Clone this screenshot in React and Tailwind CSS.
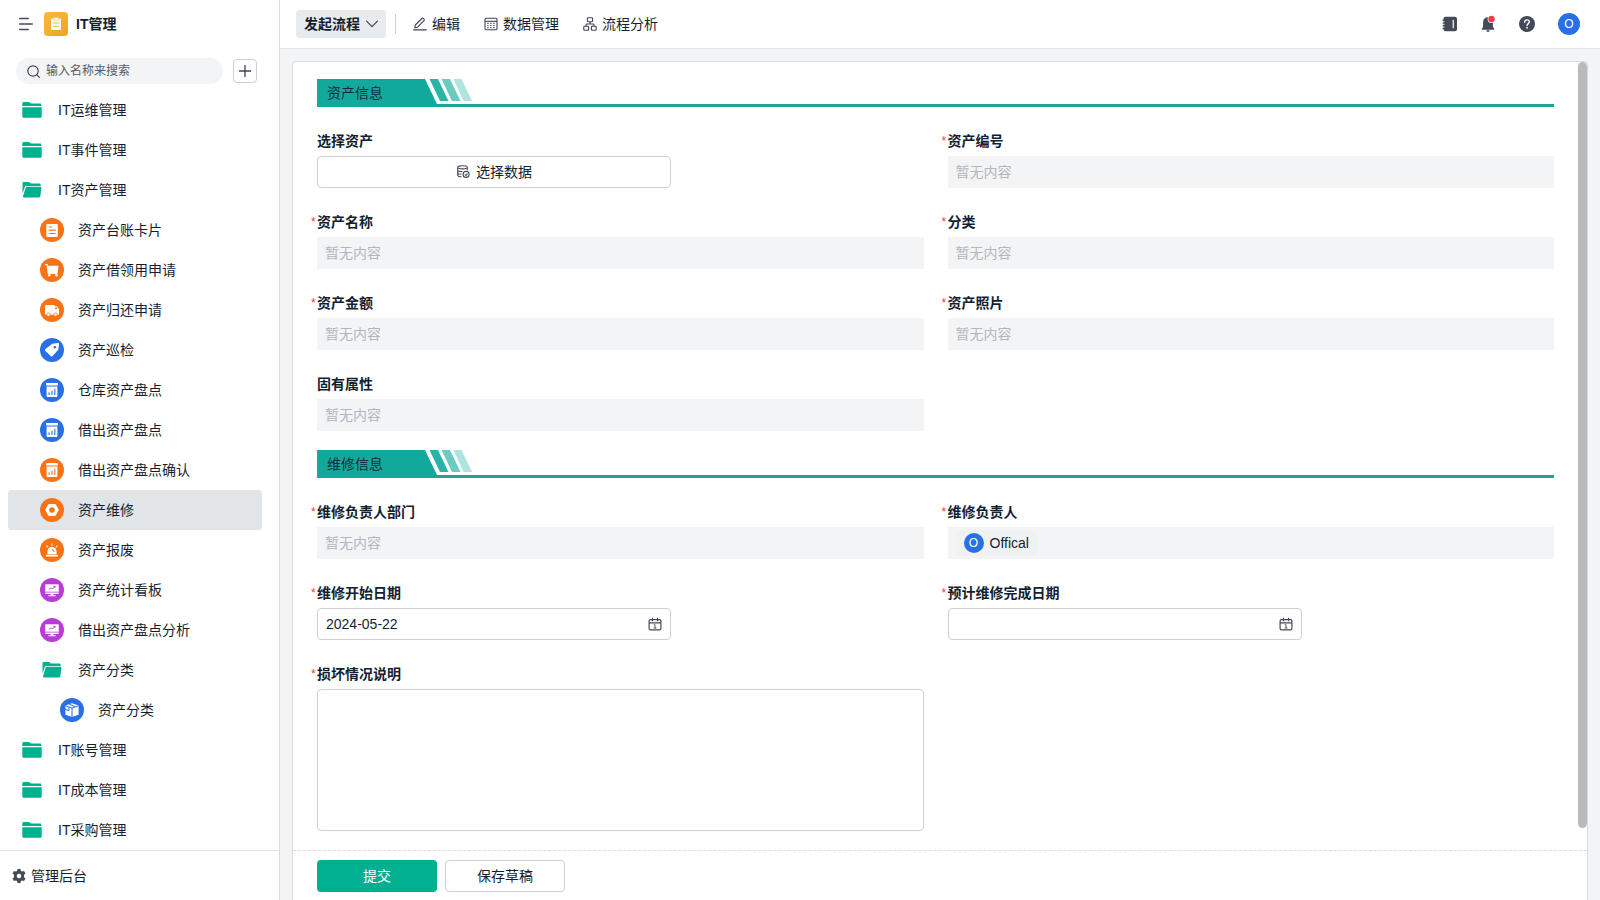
import React from "react";

/* ---------- icons ---------- */

const FolderClosed = () => (
  <svg width="20" height="16" viewBox="0 0 20 16" fill="#00b08f" aria-hidden="true">
    <path d="M1.5 0h5.2c.6 0 1 .2 1.4.6l.8.8h9.1c.9 0 1.5.6 1.5 1.5V4H.3V1.3C.3.6.8 0 1.5 0z" />
    <path d="M.3 5.200h19.400v9c0 .9-.6 1.500-1.500 1.500H1.800c-.9 0-1.500-.6-1.500-1.500z" />
  </svg>
);

const FolderOpen = () => (
  <svg width="20" height="16" viewBox="0 0 20 16" fill="#00b08f" aria-hidden="true">
    <path d="M1.500 0h5.200c.6 0 1 .2 1.400.6l.8.8h8.300c.9 0 1.500.6 1.500 1.500V4H4.600c-.9 0-1.600.5-1.900 1.300L.5 11.500V1.300C.5.6.8 0 1.500 0z" />
    <path d="M4.900 4.700h13.300c.9 0 1.400.6 1.200 1.500l-1.100 8.100c-.1.700-.7 1.200-1.400 1.200H2.300c-.9 0-1.500-.8-1.200-1.600L3.600 5.700c.2-.6.7-1 1.300-1z" />
  </svg>
);

const glyphs = {
  card: (c) => (
    <>
      <rect x="6.300" y="6" width="11.500" height="13" rx="1" fill="#fff" />
      <path d="M8.700 9h3.300M8.700 12.200h7M8.700 15.500h7" stroke={c} strokeWidth="1.200" />
    </>
  ),
  cart: () => (
    <>
      <path d="M5 6.700h2.100l1.200 8.800h9" stroke="#fff" strokeWidth="1.200" fill="none" />
      <path d="M7.500 7.800h11l-.8 7.200H8.500z" fill="#fff" />
      <circle cx="9.300" cy="17.300" r="1.300" fill="#fff" />
      <circle cx="16.500" cy="17.300" r="1.300" fill="#fff" />
    </>
  ),
  truck: (c) => (
    <>
      <path d="M6.200 7h7.600c.7 0 1.200.5 1.200 1.200h1.900l2.100 3v4.600c0 .6-.4 1-1 1H6.200c-.7 0-1.200-.5-1.200-1.200V8.200C5 7.500 5.500 7 6.200 7z" fill="#fff" />
      <path d="M15 9.500h1.500l1 1.600H15z" fill={c} />
      <circle cx="8.500" cy="16.600" r="1.700" fill="#fff" stroke={c} strokeWidth=".7" />
      <circle cx="15.500" cy="16.600" r="1.700" fill="#fff" stroke={c} strokeWidth=".7" />
    </>
  ),
  tag: (c) => (
    <>
      <path d="M12.300 5.700l5.500-.8c.8-.1 1.300.4 1.200 1.200l-.6 5.500-6 6.600c-.4.4-1 .4-1.400 0l-5.800-5.500c-.4-.4-.4-1 0-1.400z" fill="#fff" />
      <circle cx="14.900" cy="9.200" r="1.300" fill={c} />
    </>
  ),
  chart: (c) => (
    <>
      <rect x="6" y="5" width="12" height="2.400" rx=".6" fill="#fff" />
      <path d="M6.600 8.400h10.800v9.600c0 .6-.4 1-1 1H7.600c-.6 0-1-.4-1-1z" fill="#fff" />
      <path d="M9.100 14.300v2.700M12 12.800v4.200M14.800 10.700v6.300" stroke={c} strokeWidth="1.100" />
    </>
  ),
  nut: (c) => (
    <>
      <path d="M9.300 6h5.400c.5 0 .9.200 1.100.6l2.800 4.700c.2.400.2.900 0 1.300l-2.800 4.700c-.2.400-.6.600-1.100.6H9.300c-.5 0-.9-.2-1.100-.6l-2.800-4.700c-.2-.4-.2-.9 0-1.300l2.800-4.700c.2-.4.600-.6 1.100-.6z" fill="#fff" />
      <circle cx="12" cy="12" r="2.800" fill={c} />
    </>
  ),
  alarm: (c) => (
    <>
      <path d="M7.500 16.300v-2.800a4.500 4.500 0 019 0v2.800z" fill="#fff" />
      <rect x="6" y="16.800" width="12" height="1.700" rx=".5" fill="#fff" />
      <path d="M12 5.700v1.800M6.800 7.800l1 1.200M17.200 7.800l-1 1.200" stroke="#fff" strokeWidth="1.100" strokeLinecap="round" />
      <path d="M12.200 11.300l1.900 2.200" stroke={c} strokeWidth="1.100" strokeLinecap="round" />
    </>
  ),
  board: (c) => (
    <>
      <path d="M6.200 6.200h11.600c.6 0 1 .4 1 1v6.600H5.200V7.200c0-.6.4-1 1-1z" fill="#fff" />
      <path d="M5.200 14.500h13.600v.6c0 .6-.4 1-1 1h-4.400v1.200h2.300v1H8.300v-1h2.300v-1.200H6.200c-.6 0-1-.4-1-1z" fill="#fff" />
      <path d="M8.800 11.700l2.200-2 1.500 1.300 2.400-2.500M13.300 8.400h1.700v1.600" stroke={c} strokeWidth=".9" fill="none" />
    </>
  ),
  cube: (c) => (
    <>
      <path d="M12 5.200l6.600 2.200v9.300L12 19l-6.600-2.300V7.400z" fill="#fff" />
      <path d="M5.400 7.800L12 10l6.600-2.200M12 10v9M9.200 6.200l6 2.400M5 11.300l4 1.300V9.300" stroke={c} strokeWidth="1" fill="none" />
    </>
  ),
};

const ORANGE = "#f97316";
const BLUE = "#2970e6";
const PURPLE = "#bb3bd8";

const RoundIcon = ({ glyph, color }) => (
  <svg width="24" height="24" viewBox="0 0 24 24" aria-hidden="true">
    <circle cx="12" cy="12" r="12" fill={color} />
    {glyphs[glyph](color)}
  </svg>
);

const CalendarIcon = () => (
  <svg width="14" height="14" viewBox="0 0 14 14" fill="none" stroke="#444a58" strokeWidth="1.200" aria-hidden="true">
    <rect x="1.100" y="2.600" width="11.800" height="10.300" rx="1.400" />
    <path d="M1.100 5.800h11.800M4.500.8v3.400M9.500.8v3.400" />
    <path d="M5.800 7.700H7v3.400M5.600 11h2.800" strokeWidth=".9" />
  </svg>
);

/* ---------- sidebar ---------- */

const items = [
  { text: "IT运维管理", level: 0, folder: "closed" },
  { text: "IT事件管理", level: 0, folder: "closed" },
  { text: "IT资产管理", level: 0, folder: "open" },
  { text: "资产台账卡片", level: 1, glyph: "card", color: ORANGE },
  { text: "资产借领用申请", level: 1, glyph: "cart", color: ORANGE },
  { text: "资产归还申请", level: 1, glyph: "truck", color: ORANGE },
  { text: "资产巡检", level: 1, glyph: "tag", color: BLUE },
  { text: "仓库资产盘点", level: 1, glyph: "chart", color: BLUE },
  { text: "借出资产盘点", level: 1, glyph: "chart", color: BLUE },
  { text: "借出资产盘点确认", level: 1, glyph: "chart", color: ORANGE },
  { text: "资产维修", level: 1, glyph: "nut", color: ORANGE, active: true },
  { text: "资产报废", level: 1, glyph: "alarm", color: ORANGE },
  { text: "资产统计看板", level: 1, glyph: "board", color: PURPLE },
  { text: "借出资产盘点分析", level: 1, glyph: "board", color: PURPLE },
  { text: "资产分类", level: 1, folder: "open" },
  { text: "资产分类", level: 2, glyph: "cube", color: BLUE },
  { text: "IT账号管理", level: 0, folder: "closed" },
  { text: "IT成本管理", level: 0, folder: "closed" },
  { text: "IT采购管理", level: 0, folder: "closed" },
];

const indents = ["pl-3", "pl-8", "pl-[52px]"];

const NavItem = ({ item }) => (
  <li>
    <a
      href="#"
      aria-current={item.active ? "page" : undefined}
      className={`flex h-10 items-center gap-3.5 rounded ${indents[item.level]} ${item.active ? "bg-[#e1e5e8]" : ""}`}
    >
      <span className="flex w-6 justify-center">
        {item.folder === "closed" && <FolderClosed />}
        {item.folder === "open" && <FolderOpen />}
        {item.glyph && <RoundIcon glyph={item.glyph} color={item.color} />}
      </span>
      <span>{item.text}</span>
    </a>
  </li>
);

const Sidebar = () => (
  <aside className="flex w-[280px] shrink-0 flex-col border-r border-[#dadce0] bg-white">
    <div className="flex h-12 items-center pl-[19px]">
      <button type="button" aria-label="折叠菜单">
        <svg width="14" height="14" viewBox="0 0 14 14" stroke="#444a58" strokeWidth="1.400" strokeLinecap="round" aria-hidden="true">
          <path d="M.7 1.500h8.600M.7 7h12.600M.7 12.500h8.600" />
        </svg>
      </button>
      <span className="ml-[11px] flex h-6 w-6 items-center justify-center rounded bg-gradient-to-br from-[#f8b940] to-[#eea51a]">
        <svg width="12" height="14" viewBox="0 0 12 14" aria-hidden="true">
          <rect x="1" y="1.500" width="10" height="11.500" rx="1" fill="#fff" />
          <rect x="3.300" y=".3" width="5.400" height="3" rx=".8" fill="#fff" stroke="#f3b02d" strokeWidth=".6" />
          <path d="M3 6h6M3 9.200h6" stroke="#f3b02d" strokeWidth="1" />
        </svg>
      </span>
      <h1 className="ml-2 font-bold">IT管理</h1>
    </div>

    <div className="flex h-[42px] items-center gap-2.5 pt-1 pr-[22px] pl-4">
      <label className="flex h-[26px] min-w-0 flex-1 items-center gap-1.5 rounded-full bg-[#f2f4f6] pl-[11px]">
        <svg width="13" height="13" viewBox="0 0 13 13" fill="none" stroke="#3f4452" strokeWidth="1.200" strokeLinecap="round" aria-hidden="true">
          <circle cx="6" cy="6" r="5.200" />
          <path d="M9.900 9.900l2.500 2.500" />
        </svg>
        <input
          type="search"
          aria-label="搜索"
          placeholder="输入名称来搜索"
          className="min-w-0 flex-1 bg-transparent text-xs outline-none placeholder:text-[#555b68]"
        />
      </label>
      <button
        type="button"
        aria-label="新建"
        className="flex h-6 w-6 items-center justify-center rounded border border-[#cccfd4]"
      >
        <svg width="12" height="12" viewBox="0 0 12 12" stroke="#3f4452" strokeWidth="1.300" aria-hidden="true">
          <path d="M6 0v12M0 6h12" />
        </svg>
      </button>
    </div>

    <nav className="min-h-0 flex-1 overflow-hidden pr-[17px] pl-2">
      <ul>
        {items.map((item, i) => (
          <NavItem key={i} item={item} />
        ))}
      </ul>
    </nav>

    <a href="#" className="flex h-[50px] shrink-0 items-center gap-[5px] border-t border-[#dfe1e5] pl-3">
      <svg width="14" height="14" viewBox="0 0 14 14" aria-hidden="true">
        <path
          fill="#444a58"
          fillRule="evenodd"
          d="M5.500 0h3l.4 1.900 1.200.7 1.900-.7 1.500 2.600-1.500 1.300v2.400l1.500 1.300-1.500 2.600-1.900-.7-1.200.7-.4 1.900h-3l-.4-1.900-1.200-.7-1.900.7L.5 9.500 2 8.200V5.800L.5 4.500 2 1.900l1.900.7 1.200-.7zM7 4.700a2.300 2.300 0 100 4.600 2.300 2.300 0 000-4.600z"
        />
      </svg>
      管理后台
    </a>
  </aside>
);

/* ---------- top bar ---------- */

const TopBar = () => (
  <header className="flex h-[49px] shrink-0 items-center justify-between border-b border-[#e3e5e8] bg-white pr-5 pl-4">
    <div className="flex items-center">
      <button type="button" className="flex h-7 items-center gap-1.5 rounded bg-[#e8ebee] px-2 font-bold">
        发起流程
        <svg width="12" height="8" viewBox="0 0 12 8" fill="none" stroke="#3f4452" strokeWidth="1.200" strokeLinecap="round" strokeLinejoin="round" aria-hidden="true">
          <path d="M.6 1.200L6 6.600l5.400-5.400" />
        </svg>
      </button>
      <span className="mx-[9px] h-5 w-px bg-[#cfd2d6]" />
      <div className="flex items-center gap-6 pl-2">
        <button type="button" className="flex items-center gap-[5px]">
          <svg width="14" height="14" viewBox="0 0 14 14" fill="none" stroke="#3f4452" strokeWidth="1.100" strokeLinecap="round" strokeLinejoin="round" aria-hidden="true">
            <path d="M2.300 8L8.800 1.500c.5-.5 1.100-.5 1.600 0l.6.6c.5.5.5 1.100 0 1.600L4.500 10.200l-2.800.6zM.7 12.900h12.600" />
          </svg>
          编辑
        </button>
        <button type="button" className="flex items-center gap-[5px]">
          <svg width="14" height="14" viewBox="0 0 14 14" fill="none" stroke="#3f4452" strokeWidth="1.100" aria-hidden="true">
            <rect x="1" y="1.200" width="12" height="11.600" rx="1.400" />
            <path d="M1 4.300h12" />
            <path d="M3.300 6.400h8M3.300 8.500h8M3.300 10.600h8" strokeDasharray="1.300 1.700" strokeWidth="1.200" />
          </svg>
          数据管理
        </button>
        <button type="button" className="flex items-center gap-[5px]">
          <svg width="14" height="14" viewBox="0 0 14 14" fill="none" stroke="#3f4452" strokeWidth="1.100" aria-hidden="true">
            <rect x="4.400" y=".8" width="5.200" height="4" rx=".8" />
            <rect x=".8" y="9.200" width="4.800" height="4" rx=".8" />
            <rect x="8.400" y="9.200" width="4.800" height="4" rx=".8" />
            <path d="M7 4.800V7M3.100 9.200V7.600c0-.4.2-.6.600-.6h6.600c.4 0 .6.2.6.6v1.600" />
          </svg>
          流程分析
        </button>
      </div>
    </div>
    <div className="flex items-center gap-[23px]">
      <button type="button" aria-label="通讯录">
        <svg width="16" height="16" viewBox="0 0 16 16" aria-hidden="true">
          <rect x="2.500" y=".8" width="13.500" height="14.400" rx="2" fill="#444a58" />
          <path d="M2 4.200h2M2 7h2M2 9.800h2M2 12.400h2" stroke="#444a58" strokeWidth="1.200" strokeLinecap="round" />
          <path d="M2.500 5.600h1M2.500 8.400h1M2.500 11.100h1" stroke="#fff" strokeWidth=".8" />
          <path d="M12.300 4.300v7.400" stroke="#e6e8eb" strokeWidth="1.300" strokeLinecap="round" />
        </svg>
      </button>
      <button type="button" aria-label="消息">
        <svg width="16" height="18" viewBox="0 0 16 18" aria-hidden="true">
          <path d="M8 2.200c2.900 0 4.900 2.100 4.900 4.900v4.700l1.300 2.200c.2.400 0 .8-.5.800H2.300c-.5 0-.7-.4-.5-.8l1.300-2.200V7.100c0-2.800 2-4.900 4.900-4.900zM6.300 15.200h3.400c0 1-.7 1.700-1.700 1.700s-1.700-.7-1.700-1.700z" fill="#444a58" />
          <circle cx="11.500" cy="4" r="3.900" fill="#fff" />
          <circle cx="11.500" cy="4" r="3.200" fill="#ec4149" />
        </svg>
      </button>
      <button type="button" aria-label="帮助">
        <svg width="16" height="16" viewBox="0 0 16 16" aria-hidden="true">
          <circle cx="8" cy="8" r="8" fill="#444a58" />
          <path d="M5.700 6.200c0-1.400 1-2.300 2.300-2.300s2.300.8 2.300 2.100c0 1.600-2.200 1.700-2.200 3.500" fill="none" stroke="#fff" strokeWidth="1.400" strokeLinecap="round" />
          <circle cx="8.100" cy="11.800" r=".9" fill="#fff" />
        </svg>
      </button>
      <button type="button" aria-label="账户" className="flex h-[22px] w-[22px] items-center justify-center rounded-full bg-[#2970e6] text-xs text-white">
        O
      </button>
    </div>
  </header>
);

/* ---------- form ---------- */

const SectionTitle = ({ children }) => (
  <div className="flex h-7 items-stretch border-b-[3px] border-[#20a295]">
    <h2 className="-mb-[3px] flex w-[108px] items-center bg-[#11a99b] pl-2.5 text-[#142a3a]">{children}</h2>
    <svg className="-mb-[3px]" width="50" height="28" viewBox="0 0 50 28" aria-hidden="true">
      <path d="M0 0l12 25v3H0z" fill="#11a99b" />
      <path d="M4.500 0h8.500l10.500 22h-8.500z" fill="#2bb3a5" />
      <path d="M16.500 0h8.500l10.500 22h-8.500z" fill="#6acbc0" />
      <path d="M28.500 0h8l10.500 22h-8.500z" fill="#b0e5df" />
    </svg>
  </div>
);

const Field = ({ id, label, required, children }) => (
  <div className="flex min-w-0 flex-col gap-1">
    <label htmlFor={id} className="relative font-bold leading-[22px]">
      {required && <span className="absolute -left-[6px] text-xs leading-[22px] font-normal text-[#e5413e]">*</span>}
      {label}
    </label>
    {children}
  </div>
);

const EmptyField = ({ id, label, required }) => (
  <Field id={id} label={label} required={required}>
    <input
      id={id}
      readOnly
      placeholder="暂无内容"
      className="h-8 w-full bg-[#f3f4f6] px-2 outline-none placeholder:text-[#b3b6bc]"
    />
  </Field>
);

const DateField = ({ id, label, value }) => (
  <Field id={id} label={label} required>
    <div className="flex h-8 w-[354px] items-center rounded border border-[#cfd1d5] px-2">
      <input id={id} defaultValue={value} className="min-w-0 flex-1 bg-transparent outline-none" />
      <button type="button" aria-label={`${label} 选择日期`}>
        <CalendarIcon />
      </button>
    </div>
  </Field>
);

const grid = "mt-[23px] grid grid-cols-2 gap-x-6 gap-y-[23px]";

const RepairForm = () => (
  <form className="flex min-h-0 flex-1 flex-col" onSubmit={(e) => e.preventDefault()}>
    <div className="flex min-h-0 flex-1">
      <div className="min-w-0 flex-1 overflow-hidden pt-[17px] pr-6 pb-[19px] pl-6">
        <section>
          <SectionTitle>资产信息</SectionTitle>
          <div className={grid}>
            <Field id="asset" label="选择资产">
              <button id="asset" type="button" className="flex h-8 w-[354px] items-center justify-center gap-1.5 rounded border border-[#cfd1d5]">
                <svg width="14" height="14" viewBox="-1 0 14 14" fill="none" stroke="#444a58" strokeWidth="1.100" aria-hidden="true">
                  <path d="M.7 2.300C.7 1.300 2.700.7 5.400.7s4.900.6 4.900 1.600-2.200 1.600-4.900 1.600S.7 3.300.7 2.300zM.7 2.300v7.900c0 .9 1.300 1.500 3.700 1.600M10.300 2.300v3M.7 5c0 .9 1.800 1.600 4.700 1.600M.7 7.700c0 .8 1.500 1.400 3.700 1.500" />
                  <circle cx="9.100" cy="9.400" r="3" />
                  <path d="M7.800 9.400l1.100 1.100 1.600-1.900" />
                </svg>
                选择数据
              </button>
            </Field>
            <EmptyField id="asset-no" label="资产编号" required />
            <EmptyField id="asset-name" label="资产名称" required />
            <EmptyField id="category" label="分类" required />
            <EmptyField id="amount" label="资产金额" required />
            <EmptyField id="photo" label="资产照片" required />
            <EmptyField id="props" label="固有属性" />
          </div>
        </section>

        <section className="mt-[19px]">
          <SectionTitle>维修信息</SectionTitle>
          <div className={grid}>
            <EmptyField id="dept" label="维修负责人部门" required />
            <Field id="owner" label="维修负责人" required>
              <div className="flex h-8 items-center bg-[#f3f4f6] px-2">
                <output id="owner" className="flex h-[26px] items-center gap-1.5 rounded bg-[#f0f1f2] px-2">
                  <span className="flex h-5 w-5 items-center justify-center rounded-full bg-[#2970e6] text-xs text-white">O</span>
                  Offical
                </output>
              </div>
            </Field>
            <DateField id="start" label="维修开始日期" value="2024-05-22" />
            <DateField id="finish" label="预计维修完成日期" value="" />
            <Field id="damage" label="损坏情况说明" required>
              <textarea id="damage" className="block h-[142px] w-full resize-none rounded border border-[#cfd1d5] p-2 outline-none" />
            </Field>
          </div>
        </section>
      </div>
      <div className="w-[9px] shrink-0 pb-[22px]" aria-hidden="true">
        <div className="h-full rounded-full bg-[#b9babc]" />
      </div>
    </div>
    <div className="flex shrink-0 gap-2 border-t border-dashed border-[#d9dbde] px-6 pt-[9px] pb-2">
      <button type="submit" className="h-8 w-[120px] rounded bg-[#00b08f] text-white">
        提交
      </button>
      <button type="button" className="h-8 w-[120px] rounded border border-[#cfd1d5]">
        保存草稿
      </button>
    </div>
  </form>
);

export default function App() {
  return (
    <div className="flex h-screen bg-[#f2f4f6] font-['Liberation_Sans','Noto_Sans_CJK_SC',sans-serif] text-sm text-[#141e31]">
      <Sidebar />
      <div className="flex min-w-0 flex-1 flex-col">
        <TopBar />
        <main className="flex min-h-0 flex-1 flex-col px-3 pt-3">
          <div className="flex min-h-0 flex-1 flex-col rounded-t border border-b-0 border-[#d9dbde] bg-white">
            <RepairForm />
          </div>
        </main>
      </div>
    </div>
  );
}
